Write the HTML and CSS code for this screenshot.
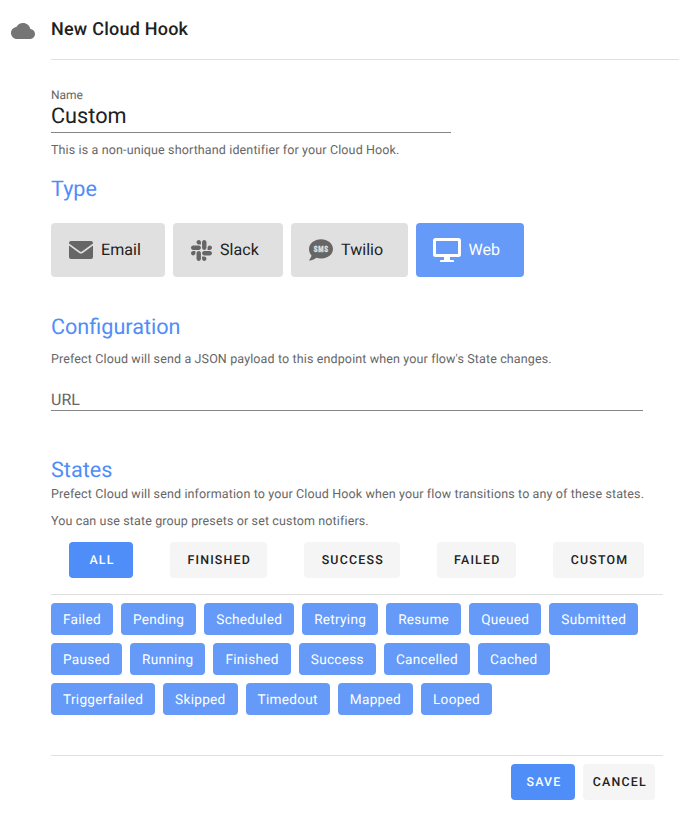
FILE: index.html
```html
<!DOCTYPE html>
<html lang="en">
<head>
<meta charset="utf-8">
<title>New Cloud Hook</title>
<link rel="stylesheet" href="styles.css">
</head>
<body>
<main class="page">
  <header class="header">
    <svg class="cloud" viewBox="0 0 24 24"><path d="M19.35 10.04C18.67 6.59 15.64 4 12 4 9.11 4 6.6 5.64 5.35 8.04 2.34 8.36 0 10.91 0 14c0 3.31 2.69 6 6 6h13c2.76 0 5-2.24 5-5 0-2.64-2.05-4.78-4.65-4.96z"/></svg>
    <h1 class="title">New Cloud Hook</h1>
  </header>
  <div class="content">
    <section class="name">
      <label class="label">Name</label>
      <div class="input">Custom</div>
      <p class="text hint">This is a non-unique shorthand identifier for your Cloud Hook.</p>
    </section>
    <section class="type">
      <h2>Type</h2>
      <div class="cards">
        <button class="card email"><svg width="24" height="24" viewBox="0 0 24 24"><path d="M2 3h20a2 2 0 0 1 2 2v.4L13.300 13.300q-1.300 1-2.600 0L0 5.400V5a2 2 0 0 1 2-2zM0 7.500l10.200 7.500q1.800 1.200 3.600 0L24 7.500V19a2 2 0 0 1-2 2H2a2 2 0 0 1-2-2z"/></svg><span>Email</span></button>
        <button class="card slack"><svg width="21" height="21" viewBox="0 0 448 448"><path transform="translate(0 -32)" d="M94.120 315.100c0 25.900-21.160 47.060-47.060 47.060S0 341 0 315.100c0-25.900 21.160-47.060 47.060-47.060h47.060v47.060zm23.720 0c0-25.900 21.160-47.060 47.060-47.060s47.060 21.160 47.060 47.060v117.840c0 25.900-21.160 47.060-47.060 47.060s-47.060-21.160-47.060-47.060V315.100zm47.060-188.980c-25.900 0-47.060-21.160-47.060-47.060S139 32 164.900 32s47.060 21.160 47.060 47.060v47.060H164.900zm0 23.720c25.900 0 47.060 21.160 47.060 47.060s-21.160 47.060-47.060 47.060H47.060C21.160 243.960 0 222.800 0 196.900s21.160-47.060 47.060-47.060H164.900zm188.980 47.060c0-25.900 21.160-47.060 47.060-47.060 25.900 0 47.060 21.160 47.060 47.060s-21.160 47.060-47.060 47.060h-47.060V196.900zm-23.720 0c0 25.900-21.160 47.060-47.060 47.060-25.900 0-47.060-21.160-47.060-47.060V79.060c0-25.900 21.160-47.060 47.060-47.060 25.900 0 47.060 21.160 47.060 47.060V196.900zM283.100 385.880c25.900 0 47.060 21.160 47.060 47.060 0 25.900-21.160 47.060-47.060 47.060-25.900 0-47.060-21.160-47.060-47.060v-47.060h47.060zm0-23.720c-25.900 0-47.060-21.160-47.060-47.060 0-25.900 21.160-47.060 47.060-47.060h117.840c25.900 0 47.060 21.160 47.060 47.060 0 25.900-21.160 47.060-47.060 47.060H283.100z"/></svg><span>Slack</span></button>
        <button class="card twilio"><svg width="24" height="24" viewBox="0 0 24 24"><path d="M12 1.200c6.600 0 12 4.300 12 9.700s-5.400 9.700-12 9.700c-1.700 0-3.300-.3-4.700-.8-1.700 1.200-3.900 2.700-6.700 2.700-.4 0-.6-.5-.3-.8 1.100-1.200 1.900-2.700 2.200-4.300C.9 15.600 0 13.400 0 10.900 0 5.500 5.400 1.200 12 1.200z"/><g transform="translate(4.700 14) scale(.7 1)"><text class="sms">SMS</text></g></svg><span>Twilio</span></button>
        <button class="card web"><svg width="28" height="28" viewBox="0 0 28 28"><path fill-rule="evenodd" d="M2.500 2h23A2.500 2.500 0 0 1 28 4.500v14a2.500 2.500 0 0 1-2.500 2.500h-23A2.500 2.500 0 0 1 0 18.500v-14A2.500 2.500 0 0 1 2.500 2zM3 5v13h22V5zM11 21h6v3h3a1 1 0 0 1 1 1v1H7v-1a1 1 0 0 1 1-1h3z"/></svg><span>Web</span></button>
      </div>
    </section>
    <section class="configuration">
      <h2>Configuration</h2>
      <p class="text">Prefect Cloud will send a JSON payload to this endpoint when your flow's State changes.</p>
      <div class="url">URL</div>
    </section>
    <section class="states">
      <h2>States</h2>
      <p class="text">Prefect Cloud will send information to your Cloud Hook when your flow transitions to any of these states.</p>
      <p class="text presets-text">You can use state group presets or set custom notifiers.</p>
      <div class="presets">
        <button class="btn primary all">All</button>
        <button class="btn finished">Finished</button>
        <button class="btn success">Success</button>
        <button class="btn failed">Failed</button>
        <button class="btn custom">Custom</button>
      </div>
      <div class="chips">
        <div class="row"><span class="chip">Failed</span><span class="chip">Pending</span><span class="chip">Scheduled</span><span class="chip">Retrying</span><span class="chip">Resume</span><span class="chip">Queued</span><span class="chip">Submitted</span></div>
        <div class="row"><span class="chip">Paused</span><span class="chip">Running</span><span class="chip">Finished</span><span class="chip">Success</span><span class="chip">Cancelled</span><span class="chip">Cached</span></div>
        <div class="row"><span class="chip">Triggerfailed</span><span class="chip">Skipped</span><span class="chip">Timedout</span><span class="chip">Mapped</span><span class="chip">Looped</span></div>
      </div>
    </section>
    <footer class="actions">
      <button class="btn primary save">Save</button>
      <button class="btn cancel">Cancel</button>
    </footer>
  </div>
</main>
</body>
</html>
```
FILE: styles.css
```css
* { box-sizing: border-box; }
body { margin: 0; background: #fff; color: #212121; font-family: Roboto, sans-serif; overflow: hidden; text-rendering: geometricPrecision; }
h1, h2, p { margin: 0; }
button { border: 0; font-family: inherit; color: inherit; padding: 0; text-rendering: inherit; }
svg { fill: currentColor; flex: none; display: block; }
.page { height: 830px; }
.header { display: flex; height: 60px; padding-left: 11px; }
.cloud { width: 24px; height: 24px; margin: 19px 16px 0 0; color: #757575; }
.title { width: 628px; border-bottom: 1px solid #e0e0e0; font-size: 18px; line-height: 60px; height: 60px; font-weight: 500; letter-spacing: .23px; }
.content { width: 612px; margin-left: 51px; }
.name { height: 115px; padding-top: 27px; width: 400px; }
.label { display: block; font-size: 12px; line-height: 16px; letter-spacing: 0; color: #666; }
.input { height: 30px; border-bottom: 1px solid #858585; font-size: 21.7px; line-height: 28px; }
.text { height: 20px; font-size: 12.5px; line-height: 22px; letter-spacing: .13px; color: #666; white-space: nowrap; }
.hint { margin-top: 7px; }
h2 { height: 28px; color: #4f8df8; font-size: 21.6px; line-height: 30px; font-weight: 400; }
.type { height: 138px; }
.cards { display: flex; gap: 8px; margin-top: 20px; }
.card { display: flex; align-items: center; height: 54px; padding-left: 18px; gap: 8px; border-radius: 4px; background: #e0e0e0; font-size: 16px; letter-spacing: .05px; }
.card span { padding-bottom: 2px; }
.card svg { color: #666; }
.sms { font-size: 8.6px; font-weight: 900; letter-spacing: 1px; fill: #e0e0e0; stroke: #e0e0e0; stroke-width: .3px; }
.email { width: 114px; }
.slack { width: 110px; }
.twilio { width: 117px; }
.web { width: 108px; padding-left: 17px; gap: 7.5px; background: #659af9; color: #fff; }
.card.web svg { color: #fff; }
.configuration { height: 143px; }
.configuration .text { margin-top: 8px; }
.url { width: 592px; height: 22px; margin-top: 20px; border-bottom: 1px solid #858585; color: #666; font-size: 16px; line-height: 21px; }
.states { height: 299px; }
.presets-text { margin-top: 7px; }
.presets { display: flex; justify-content: space-between; padding: 0 19px 0 18px; margin-top: 11px; }
.btn { height: 36px; padding: 2px 0 0 1.5px; border-radius: 4px; background: #f5f5f5; font-size: 12.4px; font-weight: 500; line-height: 34px; letter-spacing: 1.2px; text-transform: uppercase; }
.primary { background: #4f8df8; color: #fff; }
.all, .save { width: 64px; padding-left: 2px; }
.finished { width: 97px; }
.success { width: 96px; }
.failed { width: 79px; }
.custom { width: 91px; padding-left: 2px; }
.cancel { width: 72px; }
.chips { display: flex; flex-direction: column; gap: 8px; margin-top: 16px; padding-top: 8px; border-top: 1px solid #e0e0e0; }
.row { display: flex; gap: 8px; }
.chip { height: 32px; padding: 0 12px; border-radius: 4px; background: #659af9; color: #fff; font-size: 13.6px; line-height: 34px; letter-spacing: .292px; }
.actions { display: flex; justify-content: flex-end; gap: 8px; padding: 8px 8px 0 0; border-top: 1px solid #e0e0e0; }
```
